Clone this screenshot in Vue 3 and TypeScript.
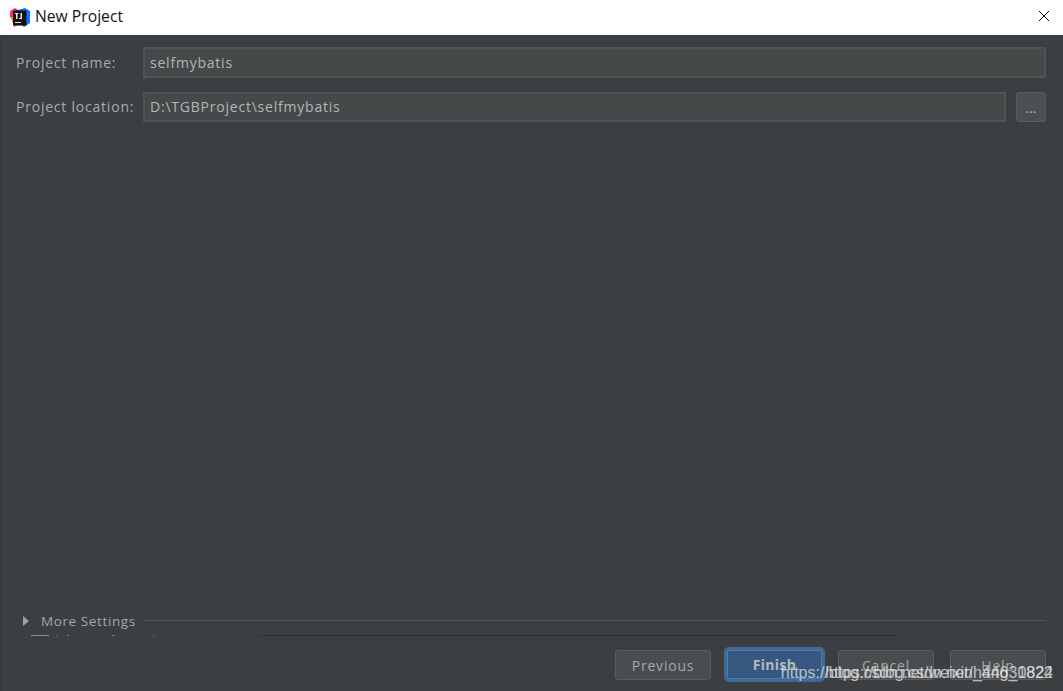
<script setup lang="ts">
const buttons: { label: string; cls: string }[] = [
  { label: 'Previous', cls: 'btn' },
  { label: 'Finish', cls: 'btn primary' },
  { label: 'Cancel', cls: 'btn' },
  { label: 'Help', cls: 'btn help' },
];
</script>

<template>
  <div class="window">
    <header class="titlebar">
      <svg class="logo" width="20" height="20" viewBox="0 0 20 20">
        <path d="M0 3 L5 0 L10 3 L4 13 L0 9 Z" fill="#fe315d" />
        <path d="M8 2 L15 0 L20 3 L20 15 L14 19 L8 14 Z" fill="#087cfa" />
        <path d="M1 9 L6 8 L9 17 L4 19 Z" fill="#fc801d" />
        <rect x="3" y="2.5" width="13.5" height="15" fill="#111" />
        <rect x="5" y="14" width="6" height="1" fill="#e8e8e8" />
        <path d="M5 5 H8.5 V6 H7.5 V11 H6 V6 H5 Z M10.5 5 H12 V11 H9 V10 H10.5 Z" fill="#e8e8e8" />
      </svg>
      <span class="title">New Project</span>
      <svg class="close" width="12" height="12" viewBox="0 0 12 12">
        <path d="M1 1 L11 11 M11 1 L1 11" stroke="#111" stroke-width="1" fill="none" />
      </svg>
    </header>

    <main class="body">
      <section class="form">
        <div class="row row-name">
          <label class="label">Project name:</label>
          <div class="input">selfmybatis</div>
        </div>
        <div class="row row-location">
          <label class="label">Project location:</label>
          <div class="input">D:\TGBProject\selfmybatis</div>
          <div class="browse">...</div>
        </div>
      </section>

      <section class="more">
        <span class="triangle"></span>
        <span class="more-label">More Settings</span>
        <span class="more-line"></span>
      </section>

      <div class="clipped">
        <span class="clip-box"></span>
        <span class="clip-text"></span>
        <span class="clip-line"></span>
      </div>

      <footer class="footer">
        <div v-for="b in buttons" :key="b.label" :class="b.cls">{{ b.label }}</div>
      </footer>

      <div class="watermark">https://blog.csdn.net/weixin_44630824</div>
      <div class="watermark">https://blog.csdn.net/hang_1822</div>
    </main>
  </div>
</template>

<style>
html, body { margin: 0; background: #3c3f41; }
</style>

<style scoped>
.window {
  width: 1063px;
  height: 691px;
  display: flex;
  flex-direction: column;
  overflow: hidden;
  font-family: "Open Sans", "Noto Sans", sans-serif;
}
.titlebar {
  height: 35px;
  flex: none;
  background: #fff;
  display: flex;
  align-items: center;
  padding: 0 13px 3px 10px;
  box-sizing: border-box;
}
.logo { flex: none; margin: 3px 5px 0 0; }
.title {
  font-size: 15.7px;
  color: #111;
  flex: 1;
}
.close { flex: none; }
.body {
  position: relative;
  flex: 1;
  min-height: 0;
  background: #3c3f41;
  border-left: 1px solid #2a3a50;
  display: flex;
  flex-direction: column;
  color: #afb1b3;
  font-size: 14px;
  letter-spacing: 0.78px;
}
.form {
  flex: 1;
  padding: 12px 17px 0 15px;
}
.row { display: flex; align-items: center; }
.row-name { height: 31px; }
.row-location { height: 30px; margin-top: 14px; }
.label { width: 127px; flex: none; color: #a8aaab; }
.row-location .label, .row-location .input { padding-bottom: 1px; }
.input {
  flex: 1;
  height: 100%;
  box-sizing: border-box;
  background: #45494a;
  border: 2px solid #505354;
  padding-left: 5px;
  display: flex;
  align-items: center;
  color: #b4b6b7;
}
.browse {
  width: 30px;
  height: 100%;
  margin-left: 10px;
  box-sizing: border-box;
  background: #4c5052;
  border: 1px solid #5a5d5f;
  border-radius: 3px;
  text-align: center;
  line-height: 30px;
  font-size: 13px;
  letter-spacing: 0.3px;
  color: #bbb;
  flex: none;
}
.more {
  display: flex;
  align-items: center;
  height: 14px;
  padding: 0 17px 0 22px;
  margin-bottom: 6px;
}
.triangle {
  width: 0;
  height: 0;
  border-left: 6px solid #a0a3a5;
  border-top: 5px solid transparent;
  border-bottom: 5px solid transparent;
  margin: -2px 12px 0 0;
}
.more-label {
  color: #9ea7ae;
  font-size: 13.5px;
  letter-spacing: 0.6px;
  margin-top: -2px;
}
.more-line {
  flex: 1;
  height: 1px;
  background: #525252;
  margin: -3px 0 0 7px;
}
.clipped {
  height: 1px;
  display: flex;
  padding: 0 167px 0 30px;
  margin-bottom: 5px;
}
.clip-box { width: 18px; height: 1px; background: #8c8f91; }
.clip-text {
  width: 210px;
  height: 1px;
  background:
    linear-gradient(#77797b, #77797b) 7px 0 / 1px 1px no-repeat,
    linear-gradient(#77797b, #77797b) 18px 0 / 2px 1px no-repeat,
    linear-gradient(#77797b, #77797b) 63px 0 / 3px 1px no-repeat,
    linear-gradient(#77797b, #77797b) 104px 0 / 1px 1px no-repeat,
    linear-gradient(#5c5e60, #5c5e60) 197px 0 / 1px 1px no-repeat;
}
.clip-line { flex: 1; height: 1px; background: #2f3133; }
.footer {
  height: 50px;
  flex: none;
  display: flex;
  justify-content: flex-end;
  align-items: flex-end;
  gap: 13px;
  padding: 0 17px 11px 0;
  box-sizing: border-box;
}
.btn {
  width: 96px;
  height: 30px;
  box-sizing: border-box;
  background: #4a4d4f;
  border: 1px solid #5a5d5f;
  border-radius: 3px;
  display: flex;
  align-items: center;
  justify-content: center;
  color: #a5a7a8;
}
.help { margin-left: 3px; }
.primary {
  width: 101px;
  height: 35px;
  margin-bottom: -2px;
  background: #365880;
  border: 3px solid #3e6a98;
  box-shadow: inset 0 0 0 1px #4f7bab;
  border-radius: 5px;
  font-weight: 700;
  letter-spacing: 0.3px;
  color: #b5b8ba;
}
.watermark {
  position: absolute;
  right: 10px;
  top: 629px;
  font-family: "Liberation Sans", sans-serif;
  font-size: 16px;
  letter-spacing: 0;
  color: rgba(228, 228, 228, 0.75);
  white-space: nowrap;
}
</style>
